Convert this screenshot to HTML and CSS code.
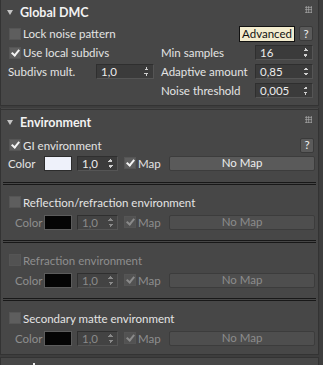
FILE: index.html
```html
<!DOCTYPE html>
<html lang="en">
<head>
    <meta charset="UTF-8">
    <meta name="viewport" content="width=device-width, initial-scale=1.0">
    <title>Global DMC</title>
    <link rel="stylesheet" href="styles.css">
</head>
<body>
<div class="rollouts">
    <div class="panel dmc">
        <div class="panel-head">
            <span class="tri"></span>
            <span class="title">Global DMC</span>
            <span class="grip"></span>
        </div>
        <div class="grid">
            <div class="row">
                <label class="check"><span class="box"></span>Lock noise pattern</label>
            </div>
            <div class="row end">
                <button class="btn-adv">Advanced</button>
                <button class="btn-help">?</button>
            </div>
            <div class="row">
                <label class="check"><span class="box on"></span>Use local subdivs</label>
            </div>
            <div class="row">
                <span class="lbl">Min samples</span>
                <span class="spin wide"><span class="val">16</span><span class="arrows"></span></span>
            </div>
            <div class="row">
                <span class="lbl">Subdivs mult.</span>
                <span class="spin wide"><span class="val">1,0</span><span class="arrows"></span></span>
            </div>
            <div class="row">
                <span class="lbl">Adaptive amount</span>
                <span class="spin wide"><span class="val">0,85</span><span class="arrows"></span></span>
            </div>
            <div class="row"></div>
            <div class="row">
                <span class="lbl">Noise threshold</span>
                <span class="spin wide"><span class="val">0,005</span><span class="arrows"></span></span>
            </div>
        </div>
    </div>

    <div class="panel env">
        <div class="panel-head">
            <span class="tri"></span>
            <span class="title">Environment</span>
            <span class="grip"></span>
        </div>

        <div class="group first">
            <div class="row title-row">
                <label class="check"><span class="box on"></span>GI environment</label>
                <button class="btn-help">?</button>
            </div>
            <div class="row color-row">
                <span class="clbl flush">Color</span>
                <span class="swatch white"></span>
                <span class="spin short"><span class="val">1,0</span><span class="arrows"></span></span>
                <label class="check map"><span class="box on"></span>Map</label>
                <button class="btn-map">No Map</button>
            </div>
        </div>

        <div class="group">
            <div class="row title-row">
                <label class="check"><span class="box"></span>Reflection/refraction environment</label>
            </div>
            <div class="row color-row off">
                <span class="clbl">Color</span>
                <span class="swatch"></span>
                <span class="spin short"><span class="val">1,0</span><span class="arrows"></span></span>
                <label class="check map"><span class="box on"></span>Map</label>
                <button class="btn-map">No Map</button>
            </div>
        </div>

        <div class="group">
            <div class="row title-row off">
                <label class="check"><span class="box"></span>Refraction environment</label>
            </div>
            <div class="row color-row off">
                <span class="clbl">Color</span>
                <span class="swatch"></span>
                <span class="spin short"><span class="val">1,0</span><span class="arrows"></span></span>
                <label class="check map"><span class="box on"></span>Map</label>
                <button class="btn-map">No Map</button>
            </div>
        </div>

        <div class="group last">
            <div class="row title-row">
                <label class="check"><span class="box"></span>Secondary matte environment</label>
            </div>
            <div class="row color-row off">
                <span class="clbl">Color</span>
                <span class="swatch"></span>
                <span class="spin short"><span class="val">1,0</span><span class="arrows"></span></span>
                <label class="check map"><span class="box on"></span>Map</label>
                <button class="btn-map">No Map</button>
            </div>
        </div>
    </div>

    <div class="panel next">
        <div class="panel-head">
            <span class="mark"></span>
        </div>
    </div>
</div>
</body>
</html>
```

FILE: styles.css
```css
body {
    margin: 0;
    background: #3d3d3d;
    font-family: Lato, "Liberation Sans", sans-serif;
    font-size: 11.5px;
    color: #e4e4e4;
    overflow: hidden;
}
.rollouts {
    width: 319px;
    display: flex;
    flex-direction: column;
    gap: 2px;
}
.panel {
    background: #474747;
    border: 1px solid #333;
    border-top: none;
    box-sizing: border-box;
}
.panel-head {
    height: 24px;
    display: flex;
    align-items: center;
    position: relative;
    padding-left: 6px;
}
.env .panel-head {
    height: 25px;
    margin-top: 1px;
    border-top: 1px solid #333;
}
.next .panel-head {
    border-top: 1px solid #333;
}
.mark {
    position: absolute;
    left: 32px;
    top: 5px;
    width: 2px;
    height: 3px;
    background: #eee;
}
.tri {
    width: 0;
    height: 0;
    border-left: 3px solid transparent;
    border-right: 3px solid transparent;
    border-top: 5px solid #c4c4c4;
    margin-right: 7px;
}
.title {
    font-weight: bold;
    font-size: 12.5px;
    color: #f2f2f2;
}
.grip {
    position: absolute;
    right: 6px;
    top: 6px;
    width: 7px;
    height: 7px;
    background-image: radial-gradient(circle, #a8a8a8 0.8px, transparent 1px);
    background-size: 2.5px 2.5px;
}

/* Global DMC */
.grid {
    display: grid;
    grid-template-columns: 153px 160px;
    grid-auto-rows: 19px;
    padding-bottom: 5px;
}
.row {
    display: flex;
    align-items: center;
}
.row.end {
    justify-content: flex-end;
    gap: 4px;
}
.check {
    display: flex;
    align-items: center;
    white-space: nowrap;
}
.box {
    width: 10px;
    height: 10px;
    background: #5e5e5e;
    border: 1px solid #555;
    margin: 0 2px 0 8px;
    position: relative;
    flex-shrink: 0;
}
.box.on::after {
    content: "";
    position: absolute;
    left: 3px;
    top: 0;
    width: 3px;
    height: 6px;
    border-right: 2px solid #f4f4f4;
    border-bottom: 2px solid #f4f4f4;
    transform: rotate(40deg);
}
.lbl {
    flex: 1;
    padding-left: 7px;
    white-space: nowrap;
}
.spin {
    height: 15px;
    background: #3b3b3b;
    border: 1px solid #2f2f2f;
    border-bottom-color: #555;
    border-right-color: #555;
    display: flex;
    align-items: center;
    justify-content: space-between;
    box-sizing: border-box;
    color: #ececec;
}
.spin.wide {
    width: 58px;
}
.grid .row:nth-child(2n) .spin {
    margin-right: 1px;
}
.val {
    padding-left: 4px;
}
.arrows {
    width: 5px;
    height: 9px;
    margin-right: 4px;
    background:
        linear-gradient(to bottom right, transparent 50%, #cfcfcf 50%) left top / 3px 3px no-repeat,
        linear-gradient(to bottom left, transparent 50%, #cfcfcf 50%) right top / 3px 3px no-repeat,
        linear-gradient(to top right, transparent 50%, #cfcfcf 50%) left bottom / 3px 3px no-repeat,
        linear-gradient(to top left, transparent 50%, #cfcfcf 50%) right bottom / 3px 3px no-repeat;
}
.btn-adv {
    font: inherit;
    height: 16px;
    padding: 0 2px;
    background: #f3ecce;
    color: #111;
    border: 1px solid #111;
    border-radius: 0;
    line-height: 12px;
}
.btn-help {
    font: inherit;
    width: 14px;
    height: 15px;
    padding: 0;
    background: #5a5a5a;
    color: #f2f2f2;
    border: 1px solid #3a3a3a;
    border-radius: 2px;
    margin-right: 1px;
    line-height: 12px;
}

/* Environment */
.group {
    border-top: 3px double #181818;
    margin: 0 2px;
    padding-top: 7px;
    height: 48px;
}
.group .row {
    height: 20px;
}
.group.first {
    border-top: none;
    padding-top: 1px;
    height: 46px;
}
.group.first .row {
    height: 18px;
}
.group.last {
    height: 46px;
}
.title-row {
    justify-content: space-between;
    margin-left: -2px;
    margin-right: -2px;
}
.title-row .btn-help {
    margin-right: 4px;
}
.color-row {
    margin-left: -2px;
    margin-right: -2px;
}
.clbl {
    width: 43px;
    padding-left: 14px;
    box-sizing: border-box;
    flex-shrink: 0;
}
.clbl.flush {
    padding-left: 7px;
}
.swatch {
    width: 28px;
    height: 15px;
    box-sizing: border-box;
    background: #040404;
    border: 1px solid #5c5c5c;
    flex-shrink: 0;
}
.swatch.white {
    background: #eef1fa;
    border-color: #2c2c2c;
}
.spin.short {
    width: 41px;
    margin-left: 5px;
}
.check.map .box {
    margin-left: 6px;
}
.btn-map {
    font: inherit;
    width: 146px;
    height: 15px;
    margin-left: auto;
    margin-right: 3px;
    padding: 0;
    background: #5a5a5a;
    color: #ededed;
    border: 1px solid #3c3c3c;
    border-radius: 2px;
    line-height: 12px;
}
.off {
    color: #8e8e8e;
}
.off .spin {
    color: #8a8a8a;
    background: #434343;
}
.off .arrows {
    opacity: 0.5;
}
.off .box.on::after {
    border-color: #8a8a8a;
}
.off .box {
    background: #525252;
}
.off .btn-map {
    color: #8c8c8c;
    background: #4e4e4e;
}
```
